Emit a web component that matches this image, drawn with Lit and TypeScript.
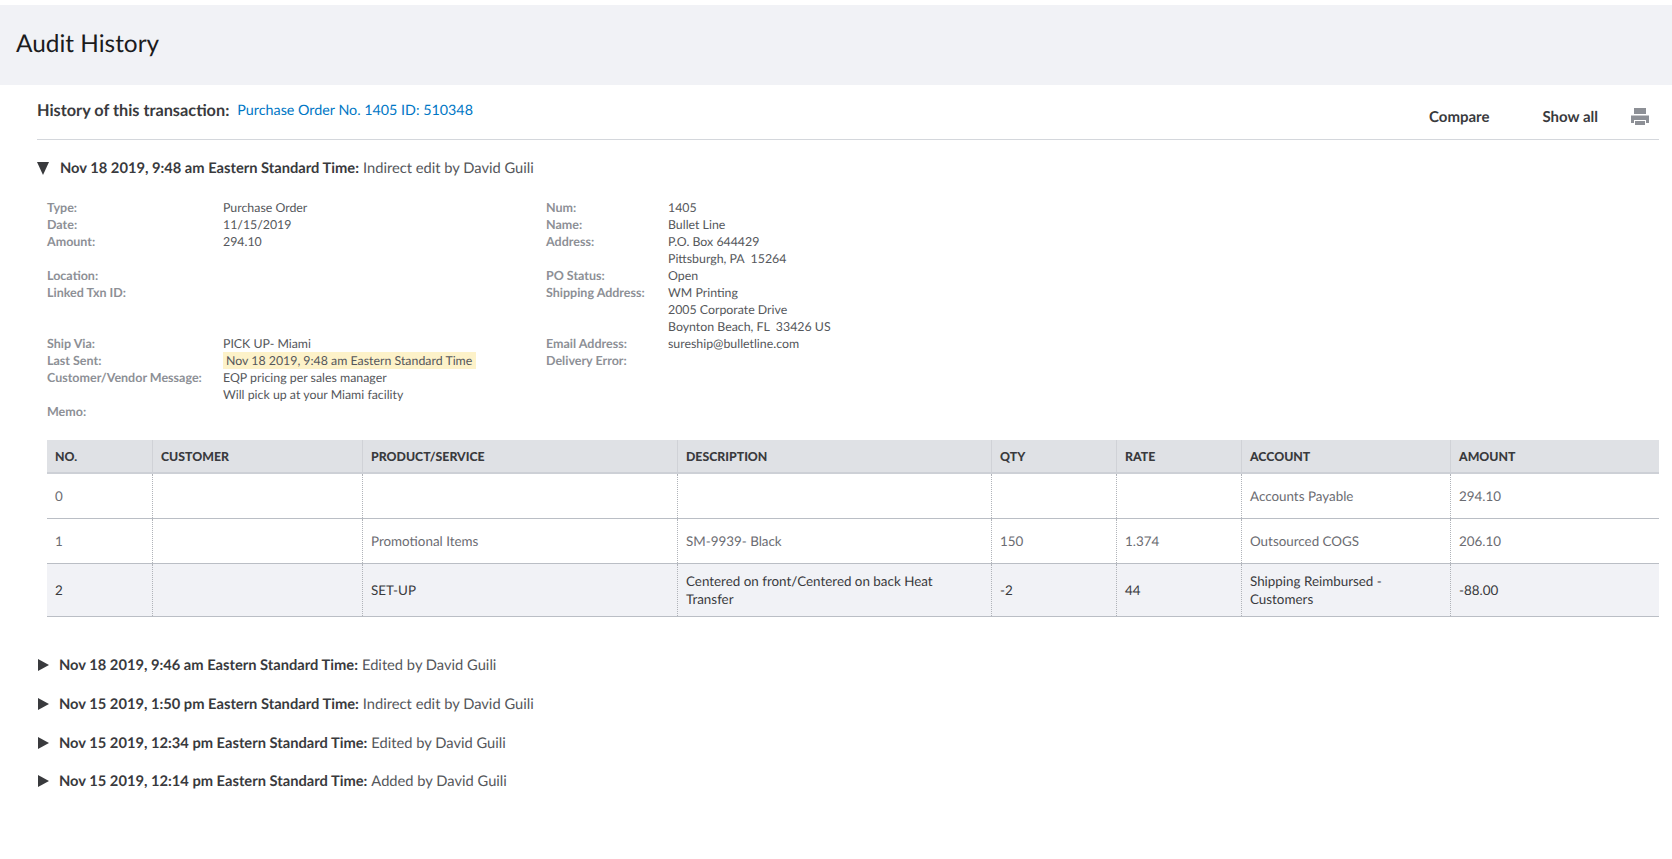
import { LitElement, html, css, svg } from "lit";
import { customElement } from "lit/decorators.js";

const leftMeta: [string, string, boolean?][] = [
  ["Type:", "Purchase Order"],
  ["Date:", "11/15/2019"],
  ["Amount:", "294.10"],
  ["", ""],
  ["Location:", ""],
  ["Linked Txn ID:", ""],
  ["", ""],
  ["", ""],
  ["Ship Via:", "PICK UP- Miami"],
  ["Last Sent:", "Nov 18 2019, 9:48 am Eastern Standard Time", true],
  ["Customer/Vendor Message:", "EQP pricing per sales manager"],
  ["", "Will pick up at your Miami facility"],
  ["Memo:", ""],
];
const rightMeta: [string, string][] = [
  ["Num:", "1405"],
  ["Name:", "Bullet Line"],
  ["Address:", "P.O. Box 644429"],
  ["", "Pittsburgh, PA\u00a0 15264"],
  ["PO Status:", "Open"],
  ["Shipping Address:", "WM Printing"],
  ["", "2005 Corporate Drive"],
  ["", "Boynton Beach, FL\u00a0 33426 US"],
  ["Email Address:", "sureship@bulletline.com"],
  ["Delivery Error:", ""],
];
const heads = ["NO.", "CUSTOMER", "PRODUCT/SERVICE", "DESCRIPTION", "QTY", "RATE", "ACCOUNT", "AMOUNT"];
const rows = [
  ["0", "", "", "", "", "", "Accounts Payable", "294.10"],
  ["1", "", "Promotional Items", "SM-9939- Black", "150", "1.374", "Outsourced COGS", "206.10"],
  ["2", "", "SET-UP", "Centered on front/Centered on back Heat Transfer", "-2", "44", "Shipping Reimbursed - Customers", "-88.00"],
];
const history = [
  ["Nov 18 2019, 9:46 am Eastern Standard Time:", "Edited by David Guili"],
  ["Nov 15 2019, 1:50 pm Eastern Standard Time:", "Indirect edit by David Guili"],
  ["Nov 15 2019, 12:34 pm Eastern Standard Time:", "Edited by David Guili"],
  ["Nov 15 2019, 12:14 pm Eastern Standard Time:", "Added by David Guili"],
];

const printer = svg`<path fill="#8d9096" d="M3 1h12v6H3zM0 8.500h18V16h-3v-3H3v3H0zM4 14h10v4H4z"/>`;

@customElement("app-root")
export class AppRoot extends LitElement {
  static styles = css`
    :host {
      display: block;
      height: 859px;
      background: #fff;
      font-family: "Lato", "Noto Sans", sans-serif;
      color: #393a3d;
      overflow: hidden;
      text-rendering: geometricPrecision;
    }
    .banner {
      margin-top: 5px;
      height: 77px;
      background: #f1f2f6;
      display: flex;
      align-items: center;
      padding: 0 0 3px 16px;
      font-size: 24.400px;
      color: #1b1b1d;
    }
    .main {
      padding: 0 13px 0 37px;
    }
    .topbar {
      height: 54px;
      border-bottom: 1px solid #d4d7dc;
      display: flex;
      align-items: center;
    }
    .title {
      font-weight: 700;
      font-size: 16.300px;
      position: relative;
      top: -2px;
    }
    .link {
      color: #0077c5;
      font-size: 14.300px;
      margin-left: 8px;
      position: relative;
      top: -2px;
    }
    .actions {
      margin: 9px 0 0 auto;
      display: flex;
      align-items: center;
      font-size: 15px;
      font-weight: 700;
    }
    .compare { margin-right: 53px; }
    .showall { margin-right: 33px; }
    .printer { width: 18px; height: 19px; margin-right: 10px; display: block; }
    .entry {
      display: flex;
      align-items: center;
      font-size: 14.700px;
      color: #55575b;
    }
    .entry b { color: #393a3d; font-weight: 700; margin-right: 4px; }
    .open { margin-top: 18px; height: 20px; }
    .tri-down {
      width: 0; height: 0;
      border-left: 6.500px solid transparent;
      border-right: 6.500px solid transparent;
      border-top: 13px solid #393a3d;
      margin-right: 11px;
    }
    .tri-right {
      width: 0; height: 0;
      border-top: 6.500px solid transparent;
      border-bottom: 6.500px solid transparent;
      border-left: 11px solid #393a3d;
      margin: 0 10px 0 1px;
    }
    .meta {
      margin: 21px 0 0 10px;
      display: grid;
      grid-template-columns: 499px 1fr;
      font-size: 12.500px;
      line-height: 17px;
    }
    .meta-col { display: grid; grid-auto-rows: 17px; }
    .left { grid-template-columns: 176px 1fr; }
    .right { grid-template-columns: 122px 1fr; }
    .label { color: #8d9096; font-weight: 700; white-space: nowrap; }
    .value { color: #55575b; white-space: nowrap; font-size: 12.350px; }
    .hl {
      background: #fdf2c9;
      padding: 0 3px;
      display: inline-block;
      width: 253px;
      box-sizing: border-box;
      height: 17px;
    }
    table {
      margin: 20px 0 0 10px;
      width: 1612px;
      border-collapse: collapse;
      table-layout: fixed;
      font-size: 13.400px;
    }
    col:nth-child(1) { width: 105px; }
    col:nth-child(2) { width: 210px; }
    col:nth-child(3) { width: 315px; }
    col:nth-child(4) { width: 314px; }
    col:nth-child(5) { width: 125px; }
    col:nth-child(6) { width: 125px; }
    col:nth-child(7) { width: 209px; }
    col:nth-child(8) { width: 209px; }
    th {
      height: 32px;
      padding: 0 8px 0 8.500px;
      text-align: left;
      background: #dfe1e5;
      border-bottom: 2px solid #cdd0d6;
      border-left: 1px solid #d0d2d7;
      color: #393a3d;
      font-size: 12.300px;
      font-weight: 900;
    }
    td {
      height: 44px;
      padding: 0 8px 0 8.500px;
      border-bottom: 1px solid #babec5;
      border-left: 1px dotted #b0b3b9;
      color: #6b6c72;
      line-height: 18px;
    }
    th:first-child, td:first-child { border-left: none; padding-left: 8px; }
    tr.shaded td { background: #f1f2f6; color: #393a3d; height: 51.500px; }
    .history { margin-top: 29.500px; display: grid; grid-auto-rows: 38.700px; }
    .closed { height: 38.700px; }
  `;

  private metaCol(items: [string, string, boolean?][], cls: string) {
    return html`<div class="meta-col ${cls}">
      ${items.map(
        ([l, v, hl]) => html`<div class="label">${l}</div>
          <div class="value">${hl ? html`<span class="hl">${v}</span>` : v}</div>`
      )}
    </div>`;
  }

  render() {
    return html`
      <div class="banner">Audit History</div>
      <div class="main">
        <div class="topbar">
          <span class="title">History of this transaction:</span>
          <span class="link">Purchase Order No. 1405 ID: 510348</span>
          <div class="actions">
            <span class="compare">Compare</span>
            <span class="showall">Show all</span>
            <svg class="printer" viewBox="0 0 18 19">${printer}</svg>
          </div>
        </div>
        <div class="entry open">
          <span class="tri-down"></span>
          <b>Nov 18 2019, 9:48 am Eastern Standard Time:</b>
          <span>Indirect edit by David Guili</span>
        </div>
        <div class="meta">
          ${this.metaCol(leftMeta, "left")} ${this.metaCol(rightMeta, "right")}
        </div>
        <table>
          <colgroup>${heads.map(() => html`<col />`)}</colgroup>
          <thead><tr>${heads.map((h) => html`<th>${h}</th>`)}</tr></thead>
          <tbody>
            ${rows.map(
              (r, i) => html`<tr class=${i === 2 ? "shaded" : ""}>${r.map((c) => html`<td>${c}</td>`)}</tr>`
            )}
          </tbody>
        </table>
        <div class="history">
          ${history.map(
            ([a, b]) => html`<div class="entry closed">
              <span class="tri-right"></span><b>${a}</b><span>${b}</span>
            </div>`
          )}
        </div>
      </div>
    `;
  }
}
